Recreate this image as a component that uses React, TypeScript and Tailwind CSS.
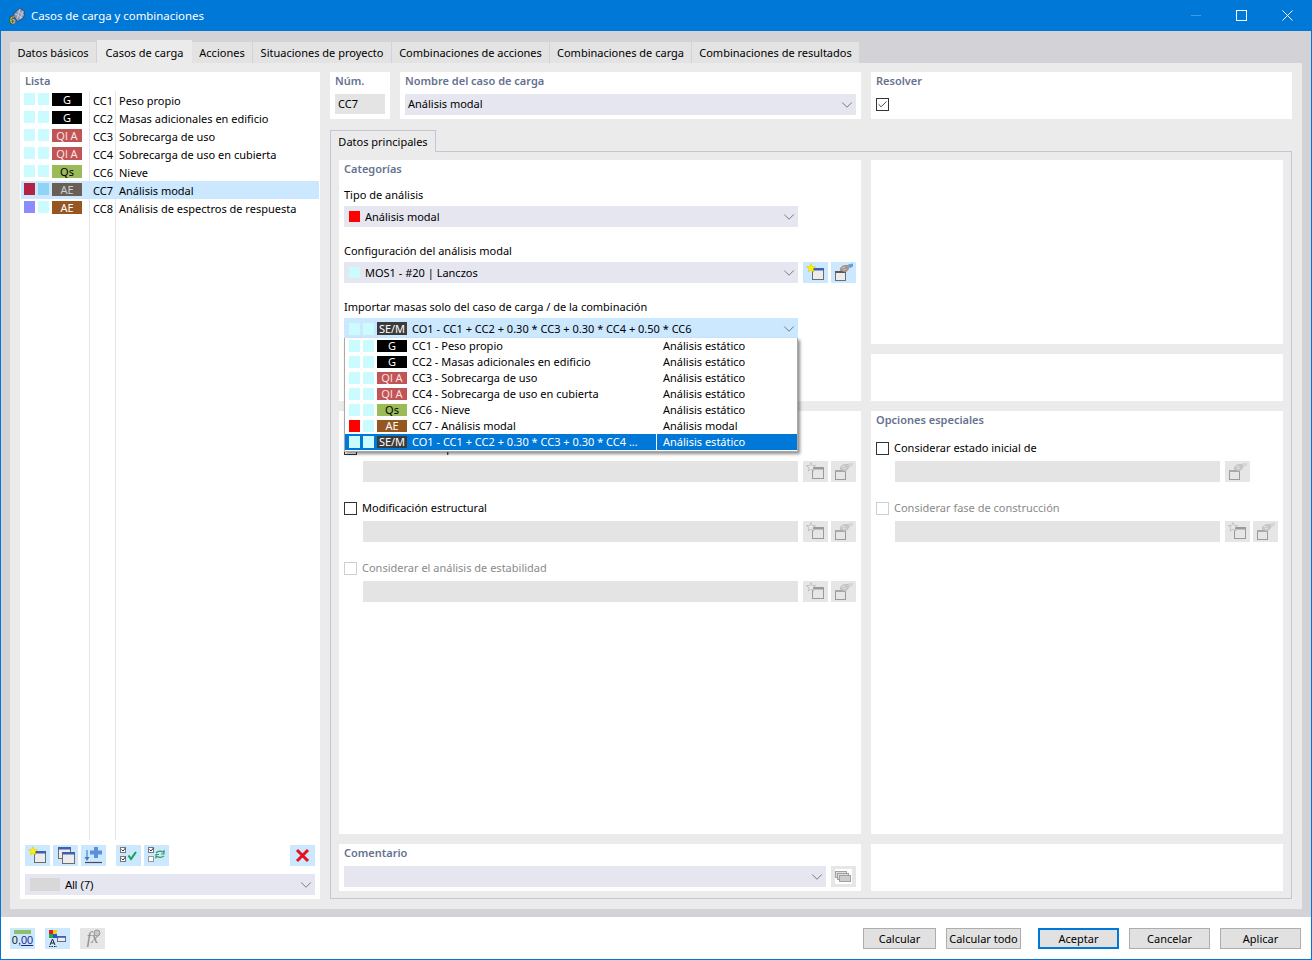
import { ChevronDown, Check } from 'lucide-react'
import type { ReactNode } from 'react'

const FONT = "font-['Noto_Sans',sans-serif]"

type Tag = 'G' | 'Ql A' | 'Qs' | 'AE' | 'AEs' | 'SE/M'

const TAG_CLASS: Record<Tag, string> = {
  G: 'bg-black text-white',
  'Ql A': 'bg-[#c15454] text-[#fbe3e3]',
  Qs: 'bg-[#9bbb59] text-black',
  AE: 'bg-[#95561f] text-white',
  AEs: 'bg-[#6a5f55] text-[#c8d2dc]',
  'SE/M': 'bg-[#3b3b3b] text-white',
}

const LIST = [
  { id: 'CC1', name: 'Peso propio', tag: 'G' as Tag, a: '#c9fbff', b: '#c9fbff' },
  { id: 'CC2', name: 'Masas adicionales en edificio', tag: 'G' as Tag, a: '#c9fbff', b: '#c9fbff' },
  { id: 'CC3', name: 'Sobrecarga de uso', tag: 'Ql A' as Tag, a: '#c9fbff', b: '#c9fbff' },
  { id: 'CC4', name: 'Sobrecarga de uso en cubierta', tag: 'Ql A' as Tag, a: '#c9fbff', b: '#c9fbff' },
  { id: 'CC6', name: 'Nieve', tag: 'Qs' as Tag, a: '#c9fbff', b: '#c9fbff' },
  { id: 'CC7', name: 'Análisis modal', tag: 'AEs' as Tag, a: '#b32145', b: '#8fd3f5', selected: true },
  { id: 'CC8', name: 'Análisis de espectros de respuesta', tag: 'AE' as Tag, a: '#8c8cff', b: '#c9fbff' },
]

const DROPDOWN = [
  { label: 'CC1 - Peso propio', type: 'Análisis estático', tag: 'G' as Tag, a: '#c9fbff' },
  { label: 'CC2 - Masas adicionales en edificio', type: 'Análisis estático', tag: 'G' as Tag, a: '#c9fbff' },
  { label: 'CC3 - Sobrecarga de uso', type: 'Análisis estático', tag: 'Ql A' as Tag, a: '#c9fbff' },
  { label: 'CC4 - Sobrecarga de uso en cubierta', type: 'Análisis estático', tag: 'Ql A' as Tag, a: '#c9fbff' },
  { label: 'CC6 - Nieve', type: 'Análisis estático', tag: 'Qs' as Tag, a: '#c9fbff' },
  { label: 'CC7 - Análisis modal', type: 'Análisis modal', tag: 'AE' as Tag, a: '#ff0000' },
  { label: 'CO1 - CC1 + CC2 + 0.30 * CC3 + 0.30 * CC4 ...', type: 'Análisis estático', tag: 'SE/M' as Tag, a: '#c9fbff', selected: true },
]

const TABS = [
  { label: 'Datos básicos', w: 'w-[87px]' },
  { label: 'Casos de carga', w: 'w-[95px]', active: true },
  { label: 'Acciones', w: 'w-[61px]' },
  { label: 'Situaciones de proyecto', w: 'w-[139px]' },
  { label: 'Combinaciones de acciones', w: 'w-[158px]' },
  { label: 'Combinaciones de carga', w: 'w-[142px]' },
  { label: 'Combinaciones de resultados', w: 'w-[168px]' },
]

function TagChip({ tag, className = 'w-[30px] h-[12px]' }: { tag: Tag; className?: string }) {
  return (
    <span className={`${className} ${TAG_CLASS[tag]} flex shrink-0 items-center justify-center text-[11px] leading-none`}>
      {tag === 'AEs' ? 'AE' : tag}
    </span>
  )
}

function Heading({ children }: { children: ReactNode }) {
  return <div className="h-[18px] text-[11px] font-semibold leading-[18px] text-[#65728f]">{children}</div>
}

function Field({ children, className = 'text-black' }: { children: ReactNode; className?: string }) {
  return <div className={`h-[16px] text-[11px] leading-[16px] ${className}`}>{children}</div>
}

function Select({ children, className = 'bg-[#e6e6f0]', w }: { children?: ReactNode; className?: string; w: string }) {
  return (
    <div className={`flex h-[21px] items-center ${w} ${className} text-[11px] text-black`}>
      <div className="flex min-w-0 flex-1 items-center">{children}</div>
      <ChevronDown className="size-[18px] text-[#555]" strokeWidth={1} />
    </div>
  )
}

function StarWindow({ off }: { off?: boolean }) {
  const line = off ? '#9a9a9a' : '#6d6d6d'
  return (
    <svg viewBox="0 0 25 21" className="size-full">
      <rect x="9.5" y="6.5" width="11" height="11" fill={off ? '#e6e6e6' : '#ececec'} stroke={line} />
      <rect x="9" y="6" width="12" height="2.5" fill={off ? '#9a9a9a' : '#3f5fb0'} />
      <path d="M8 1.5l1.2 3 3.4.2-2.6 2 .9 3.3L8 8.2 5.1 10l.9-3.3-2.6-2 3.4-.2z" fill={off ? '#e8e8e8' : '#fff200'} stroke={off ? '#a0a0a0' : '#d8c800'} strokeWidth="0.5" />
    </svg>
  )
}

function HandWindow({ off }: { off?: boolean }) {
  const line = off ? '#9a9a9a' : '#6d6d6d'
  return (
    <svg viewBox="0 0 25 21" className="size-full">
      <rect x="4.5" y="9.5" width="10" height="9" fill={off ? '#e6e6e6' : '#ececec'} stroke={line} />
      <rect x="4" y="9" width="11" height="2" fill={off ? '#a8a8a8' : '#5a5a5a'} />
      <path d="M9 6.5c1-2 3-3.5 5-3.5h3l2 1-1 3-2 2.5-3 .5-2-1-2 0z" fill={off ? '#c6c6c6' : '#a8968c'} />
      <path d="M11 6l3-1M12 8l3-1" stroke={off ? '#ececec' : '#d8ccc4'} strokeWidth="0.8" />
      <path d="M17 2.5l5-1v3l-3 1.5z" fill={off ? '#d6d6d6' : '#5f9fd8'} />
    </svg>
  )
}

function CopyWindows() {
  return (
    <svg viewBox="0 0 25 21" className="size-full">
      <rect x="5.5" y="2.5" width="12" height="11" fill="#ececec" stroke="#6d6d6d" />
      <rect x="5" y="2" width="13" height="2.5" fill="#3f5fb0" />
      <rect x="9.5" y="7.5" width="12" height="11" fill="#ececec" stroke="#6d6d6d" />
      <rect x="9" y="7" width="13" height="2.5" fill="#3f5fb0" />
    </svg>
  )
}

function ImportPlus() {
  return (
    <svg viewBox="0 0 25 21" className="size-full">
      <path d="M13 2h4v3.5h4v4h-4V13h-4V9.5H9v-4h4z" fill="#5b8fdc" />
      <path d="M6 5v9" stroke="#5b8fdc" strokeWidth="1.4" />
      <path d="M3.5 12L6 16l2.5-4z" fill="#4a78b8" />
      <path d="M4 17.5h17" stroke="#4a4a5a" strokeWidth="1.2" />
    </svg>
  )
}

function CheckRows({ swap }: { swap?: boolean }) {
  return (
    <svg viewBox="0 0 25 21" className="size-full">
      <rect x="4.5" y="2.5" width="5" height="5" fill="#fff" stroke="#777" />
      <path d="M5.500 4.5L7 6l2.5-3" stroke="#333" fill="none" />
      <rect x="4.5" y="11.5" width="5" height="5" fill="#fff" stroke={swap ? '#999' : '#777'} />
      {swap ? (
        <>
          <path d="M12 8c2-2 5-2 7-1l1-1v3h-3" stroke="#2f9e5b" strokeWidth="1.2" fill="none" />
          <path d="M20 11c-2 1.5-5 1.5-7 .5l-1 1v-3h3" stroke="#2f9e5b" strokeWidth="1.2" fill="none" />
        </>
      ) : (
        <>
          <path d="M5.5 13.500L7 15l2.500-3" stroke="#333" fill="none" />
          <path d="M12.5 10.5L15 14l5-7" stroke="#12a34f" strokeWidth="2" fill="none" />
        </>
      )}
    </svg>
  )
}

function ColorWindow() {
  return (
    <svg viewBox="0 0 25 21" className="size-full">
      <rect x="4" y="2" width="4" height="4" fill="#d92020" />
      <rect x="8" y="2" width="4" height="4" fill="#f2d21b" />
      <rect x="4" y="6" width="4" height="4" fill="#22a845" />
      <rect x="8" y="6" width="4" height="4" fill="#3050d0" />
      <rect x="12.5" y="8.5" width="8" height="5" fill="#ececec" stroke="#6d6d6d" />
      <rect x="12" y="8" width="9" height="1.8" fill="#3f5fb0" />
      <path d="M5 17l2.5-6 2.5 6M6 15h3" stroke="#222" fill="none" />
      <path d="M4 18.5h8" stroke="#222" strokeDasharray="1.5 1" />
    </svg>
  )
}

function ToolButton({ children, off, className = '' }: { children?: ReactNode; off?: boolean; className?: string }) {
  return <div className={`h-[21px] w-[25px] shrink-0 ${off ? 'bg-[#e6e6e6]' : 'bg-[#cce8ff]'} ${className}`}>{children}</div>
}

function Checkbox({ checked, off }: { checked?: boolean; off?: boolean }) {
  return (
    <span className={`flex size-[13px] shrink-0 items-center justify-center border bg-white ${off ? 'border-[#cfcfcf]' : 'border-[#333]'}`}>
      {checked && <Check className="size-[11px] text-[#333]" strokeWidth={2} />}
    </span>
  )
}

function Swatch({ color }: { color: string }) {
  return <span className="h-[12px] w-[11px] shrink-0" style={{ backgroundColor: color }} />
}

function OptionRow({ label, off, tools, inputW }: { label: string; off?: boolean; tools: ReactNode; inputW: string }) {
  return (
    <div>
      <Field className={`flex items-center gap-[5px] ${off ? 'text-[#8a8a8a]' : 'text-black'}`}>
        <Checkbox off={off} />
        <span>{label}</span>
      </Field>
      <div className="mt-[5px] flex gap-[5px] pl-[19px]">
        <div className={`h-[21px] ${inputW} bg-[#e4e4e4]`} />
        <div className="flex gap-[3px]">{tools}</div>
      </div>
    </div>
  )
}

function DisabledTools() {
  return (
    <>
      <ToolButton off><StarWindow off /></ToolButton>
      <ToolButton off><HandWindow off /></ToolButton>
    </>
  )
}

function ImportDropdown() {
  return (
    <div className="absolute left-[5px] top-[178px] z-10 w-[454px] border border-t-0 border-[#a9a9a9] bg-white pb-[1px] shadow-[2px_2px_3px_rgba(0,0,0,0.45)]">
      {DROPDOWN.map((row) => (
        <div key={row.label} className={`flex h-[16px] items-center text-[11px] ${row.selected ? 'bg-[#0078d7] text-white' : 'text-black'}`}>
          <div className="flex w-[311px] items-center pl-[4px]">
            <div className="flex gap-[3px]">
              <Swatch color={row.a} />
              <Swatch color="#c9fbff" />
            </div>
            <TagChip tag={row.tag} className="ml-[3px] h-[12px] w-[30px] pb-[2px]" />
            <span className="ml-[5px] whitespace-nowrap">{row.label}</span>
          </div>
          <div className={`flex h-full flex-1 items-center border-l pl-[6px] ${row.selected ? 'border-white' : 'border-transparent'}`}>{row.type}</div>
        </div>
      ))}
    </div>
  )
}

export default function App() {
  return (
    <div className={`${FONT} flex h-[960px] w-[1312px] flex-col overflow-hidden border-x border-b border-[#0078d7] bg-white text-[11px] text-black`}>
      <header className="flex h-[31px] shrink-0 items-center bg-[#0078d7] text-white">
        <svg viewBox="0 0 18 18" className="ml-[7px] size-[18px]">
          <path d="M5 8l6.500-7 5 3.500-1 6.500-6 3.500z" fill="#8c97b5" stroke="#2f3a52" strokeWidth="0.7" />
          <path d="M7 6.500l7 4.500M9.500 4l6.500 4.500M12 2l-3 10M15 4l-3 8" stroke="#dfe6f2" strokeWidth="0.6" />
          <text x="1.500" y="16.500" fontSize="10" fontWeight="800" fill="#f5c832" stroke="#2b2b2b" strokeWidth="0.4">6</text>
        </svg>
        <span className="ml-[5px] text-[11.4px]">Casos de carga y combinaciones</span>
        <div className="ml-auto flex items-center">
          <span className="mr-[35px] h-px w-[10px] bg-[#3d9be3]" />
          <span className="mr-[35px] size-[11px] border border-white" />
          <svg viewBox="0 0 11 11" className="mr-[18px] size-[11px]">
            <path d="M.5.5l10 10M10.500.5l-10 10" stroke="#fff" strokeWidth="1" />
          </svg>
        </div>
      </header>

      <main className="flex min-h-0 flex-1 flex-col bg-[#d3d2d6] px-[9px] pb-[8px] pt-[9px]">
        <div className="flex h-[23px] shrink-0 items-end">
          {TABS.map((tab) => (
            <div
              key={tab.label}
              className={`flex shrink-0 items-center justify-center text-[11px] ${tab.w} ${tab.active ? 'h-[23px] bg-[#ebebeb] pt-[3px]' : 'h-[21px] border-r border-[#d3d2d6] bg-[#e3e3e3] pt-[1px]'}`}
            >
              {tab.label}
            </div>
          ))}
        </div>

        <div className="flex min-h-0 flex-1 gap-[10px] bg-[#ebebeb] px-[10px] pb-[10px] pt-[9px]">
          <section className="flex w-[300px] shrink-0 flex-col bg-white">
            <div className="pl-[5px]"><Heading>Lista</Heading></div>
            <div className="relative mt-[1px] flex-1">
              <div className="absolute bottom-0 left-[69px] top-0 w-[27px] border-x border-[#e5e5e5]" />
              {LIST.map((row) => (
                <div key={row.id} className={`relative mx-[1px] flex h-[18px] items-start ${row.selected ? 'bg-[#cce8ff]' : ''}`}>
                  <div className="ml-[3px] mt-[2px] flex gap-[3px]">
                    <Swatch color={row.a} />
                    <Swatch color={row.b} />
                  </div>
                  <TagChip tag={row.tag} className="ml-[3px] mt-[2px] h-[13px] w-[30px]" />
                  <span className="ml-[11px] mt-[1px] w-[26px] leading-[18px]">{row.id}</span>
                  <span className="mt-[1px] whitespace-nowrap leading-[18px]">{row.name}</span>
                </div>
              ))}
            </div>
            <div className="mt-[5px] flex h-[21px] gap-[3px] px-[5px]">
              <ToolButton><StarWindow /></ToolButton>
              <ToolButton><CopyWindows /></ToolButton>
              <ToolButton><ImportPlus /></ToolButton>
              <ToolButton className="ml-[7px]"><CheckRows /></ToolButton>
              <ToolButton><CheckRows swap /></ToolButton>
              <ToolButton className="ml-auto">
                <svg viewBox="0 0 25 21" className="size-full">
                  <path d="M7 5l11 11M18 5L7 16" stroke="#e8101c" strokeWidth="3" />
                </svg>
              </ToolButton>
            </div>
            <div className="mb-[4px] mt-[8px] px-[5px]">
              <Select w="w-full">
                <span className="ml-[5px] h-[13px] w-[30px] bg-[#d8d8d8]" />
                <span className="ml-[5px] mt-[2px] font-['Liberation_Sans',sans-serif]">All (7)</span>
              </Select>
            </div>
          </section>

          <section className="flex min-w-0 flex-1 flex-col">
            <div className="flex h-[47px] shrink-0 gap-[10px]">
              <div className="w-[60px] bg-white px-[5px]">
                <Heading>Núm.</Heading>
                <div className="mt-[4px] flex h-[20px] items-center bg-[#e4e4e4] pl-[3px]">CC7</div>
              </div>
              <div className="w-[461px] bg-white px-[5px]">
                <Heading>Nombre del caso de carga</Heading>
                <div className="mt-[4px]">
                  <Select w="w-full"><span className="pl-[3px]">Análisis modal</span></Select>
                </div>
              </div>
              <div className="flex-1 bg-white px-[5px]">
                <Heading>Resolver</Heading>
                <div className="mt-[8px]"><Checkbox checked /></div>
              </div>
            </div>

            <div className="mt-[11px] flex h-[22px] shrink-0">
              <div className="z-[1] flex h-[22px] w-[106px] items-center justify-center border border-b-0 border-[#c5c5d3] bg-[#ebebeb] pt-[2px]">Datos principales</div>
            </div>

            <div className="-mt-px flex min-h-0 flex-1 gap-[10px] border border-[#c5c5d3] px-[8px] pb-[7px] pt-[8px]">
              <div className="flex w-[522px] shrink-0 flex-col gap-[10px]">
                <div className="relative h-[241px] shrink-0 bg-white px-[5px]">
                  <Heading>Categorías</Heading>
                  <Field className="mt-[9px] text-black">Tipo de análisis</Field>
                  <div className="mt-[3px]">
                    <Select w="w-[454px]">
                      <span className="ml-[5px] size-[11px] bg-[#ff0000]" />
                      <span className="ml-[5px] mt-[2px]">Análisis modal</span>
                    </Select>
                  </div>
                  <Field className="mt-[16px] text-black">Configuración del análisis modal</Field>
                  <div className="mt-[3px] flex gap-[5px]">
                    <Select w="w-[454px]">
                      <span className="ml-[5px] size-[11px] bg-[#c9fbff]" />
                      <span className="ml-[5px] mt-[2px]">MOS1 - #20 | Lanczos</span>
                    </Select>
                    <div className="flex gap-[3px]">
                      <ToolButton><StarWindow /></ToolButton>
                      <ToolButton><HandWindow /></ToolButton>
                    </div>
                  </div>
                  <Field className="mt-[16px] text-black">Importar masas solo del caso de carga / de la combinación</Field>
                  <div className="mt-[3px]">
                    <Select w="w-[454px]" className="bg-[#cce8ff]">
                      <span className="ml-[5px] flex items-center gap-[3px]">
                        <Swatch color="#c9fbff" />
                        <Swatch color="#c9fbff" />
                        <TagChip tag="SE/M" className="h-[13px] w-[30px]" />
                      </span>
                      <span className="ml-[5px] mt-[2px] whitespace-nowrap">CO1 - CC1 + CC2 + 0.30 * CC3 + 0.30 * CC4 + 0.50 * CC6</span>
                    </Select>
                  </div>
                  <ImportDropdown />
                </div>

                <div className="min-h-0 flex-1 bg-white px-[5px]">
                  <Heading>Opciones</Heading>
                  <div className="mt-[11px] flex flex-col gap-[18px]">
                    <OptionRow label="Considerar la imperfección" inputW="w-[435px]" tools={<DisabledTools />} />
                    <OptionRow label="Modificación estructural" inputW="w-[435px]" tools={<DisabledTools />} />
                    <OptionRow label="Considerar el análisis de estabilidad" off inputW="w-[435px]" tools={<DisabledTools />} />
                  </div>
                </div>

                <div className="h-[47px] shrink-0 bg-white px-[5px]">
                  <Heading>Comentario</Heading>
                  <div className="mt-[4px] flex gap-[5px]">
                    <Select w="w-[482px]" />
                    <ToolButton off>
                      <svg viewBox="0 0 25 21" className="size-full">
                        <rect x="4" y="3" width="17" height="15" fill="#fff" />
                        <rect x="4.5" y="5.5" width="11" height="6" fill="#ddd" stroke="#a0a0a0" />
                        <rect x="6.5" y="7.5" width="11" height="6" fill="#ddd" stroke="#a0a0a0" />
                        <rect x="8.5" y="9.5" width="11" height="6" fill="#ccc" stroke="#a0a0a0" />
                      </svg>
                    </ToolButton>
                  </div>
                </div>
              </div>

              <div className="flex min-w-0 flex-1 flex-col gap-[10px]">
                <div className="h-[184px] shrink-0 bg-white" />
                <div className="h-[47px] shrink-0 bg-white" />
                <div className="min-h-0 flex-1 bg-white px-[5px]">
                  <Heading>Opciones especiales</Heading>
                  <div className="mt-[11px] flex flex-col gap-[18px]">
                    <OptionRow label="Considerar estado inicial de" inputW="w-[325px]" tools={<ToolButton off><HandWindow off /></ToolButton>} />
                    <OptionRow label="Considerar fase de construcción" off inputW="w-[325px]" tools={<DisabledTools />} />
                  </div>
                </div>
                <div className="h-[47px] shrink-0 bg-white" />
              </div>
            </div>
          </section>
        </div>
      </main>

      <footer className="flex h-[42px] shrink-0 items-center pl-[9px] pr-[10px]">
        <div className="flex gap-[10px]">
          <ToolButton className="flex flex-col items-center pt-[2px]">
            <span className="h-[4px] w-[17px] bg-[#8cc06a]" />
            <span className="font-['Liberation_Sans',sans-serif] text-[11px] leading-[12px] text-[#222]">
              0,<span className="text-[#1c2a8a] underline">00</span>
            </span>
          </ToolButton>
          <ToolButton><ColorWindow /></ToolButton>
          <ToolButton off className="relative flex items-center justify-center font-['Liberation_Serif',serif] text-[16px] italic leading-none text-[#8a8a8a]">
            fx
            <svg viewBox="0 0 8 8" className="absolute right-[4px] top-[1px] size-[8px]">
              <circle cx="4" cy="4" r="3" fill="#c8c8c8" stroke="#8a8a8a" strokeWidth="0.8" />
            </svg>
          </ToolButton>
        </div>
        <div className="ml-auto flex items-center">
          <button className="h-[21px] w-[73px] border border-[#adadad] bg-[#e1e1e1] pt-[2px]">Calcular</button>
          <button className="ml-[10px] h-[21px] w-[75px] border border-[#adadad] bg-[#e1e1e1] pt-[2px]">Calcular todo</button>
          <button className="ml-[17px] h-[21px] w-[81px] border-2 border-[#0078d7] bg-[#e1e1e1] pt-[1px]">Aceptar</button>
          <button className="ml-[10px] h-[21px] w-[81px] border border-[#adadad] bg-[#e1e1e1] pt-[2px]">Cancelar</button>
          <button className="ml-[10px] h-[21px] w-[81px] border border-[#adadad] bg-[#e1e1e1] pt-[2px]">Aplicar</button>
        </div>
      </footer>
    </div>
  )
}
